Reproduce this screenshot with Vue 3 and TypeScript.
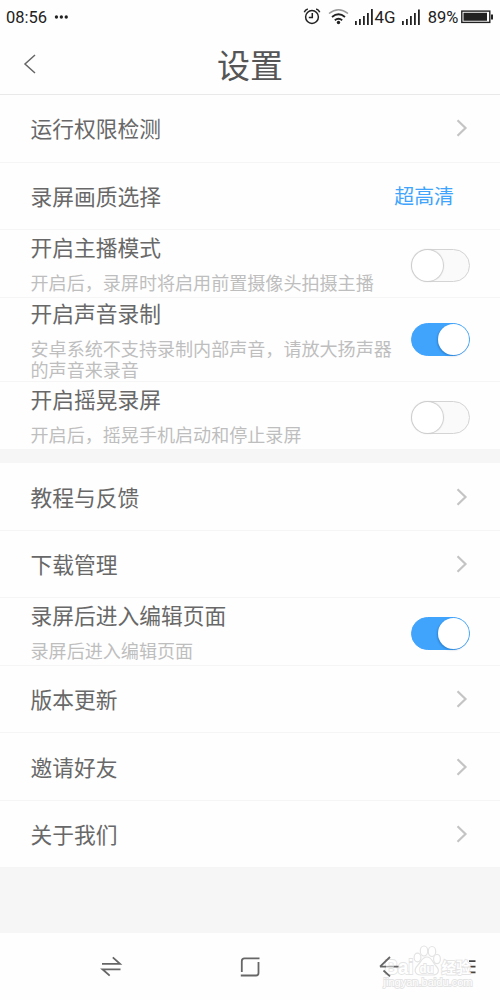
<script setup lang="ts">
interface Row {
  title: string
  sub?: string
  kind: 'link' | 'value' | 'switch'
  on?: boolean
  value?: string
  tall?: boolean
}

const groups: Row[][] = [
  [
    { title: '运行权限检测', kind: 'link' },
    { title: '录屏画质选择', kind: 'value', value: '超高清' },
    { title: '开启主播模式', sub: '开启后，录屏时将启用前置摄像头拍摄主播', kind: 'switch', on: false },
    { title: '开启声音录制', sub: '安卓系统不支持录制内部声音，请放大扬声器\n的声音来录音', kind: 'switch', on: true, tall: true },
    { title: '开启摇晃录屏', sub: '开启后，摇晃手机启动和停止录屏', kind: 'switch', on: false },
  ],
  [
    { title: '教程与反馈', kind: 'link' },
    { title: '下载管理', kind: 'link' },
    { title: '录屏后进入编辑页面', sub: '录屏后进入编辑页面', kind: 'switch', on: true },
    { title: '版本更新', kind: 'link' },
    { title: '邀请好友', kind: 'link' },
    { title: '关于我们', kind: 'link' },
  ],
]
</script>

<template>
  <div class="screen">
    <div class="status">
      <span class="time">08:56</span>
      <svg class="dots" width="16" height="4" viewBox="0 0 16 4"><circle cx="2.500" cy="2" r="1.700" /><circle cx="7.500" cy="2" r="1.700" /><circle cx="12.500" cy="2" r="1.700" /></svg>
      <svg class="signals" width="120" height="20" viewBox="0 0 120 20">
        <g fill="none" stroke="#222" stroke-width="1.5">
          <circle cx="9" cy="10" r="6.4" />
          <path d="M9.3 6v4.6H5.8M1.3 5.2Q2 2.8 4.8 2M16.7 5.2Q16 2.8 13.2 2" />
          <path d="M26 6.500Q35.500-1.200 45 6.500" stroke="#999" />
          <path d="M29 10Q35.500 4.600 42 10M31.800 13.300Q35.500 10.300 39.200 13.300" stroke-width="1.800" />
        </g>
        <circle cx="35.500" cy="15.500" r="1.700" fill="#222" />
        <path fill="#222" d="M52 14h1.800v4h-1.800zM56 12h1.800v6h-1.800zM60 9h1.800v9h-1.800zM64 6h1.800v12h-1.800zM68 2h1.800v16h-1.800zM99 14h1.800v4h-1.800zM103 12h1.800v6h-1.800zM107 9h1.800v9h-1.800zM111 6h1.800v12h-1.800zM115 2.500h1.800v15.500h-1.800z" />
        <text x="71.500" y="16.300" textLength="21" lengthAdjust="spacingAndGlyphs">4G</text>
      </svg>
      <span class="percent">89%</span>
      <svg class="battery" width="33" height="14" viewBox="0 0 33 14">
        <rect x=".8" y="1.100" width="28" height="11.300" fill="none" stroke="#222" stroke-width="1.400" />
        <path fill="#222" d="M2.500 2.800h23.500v8H2.500zM30 4.500h2v5h-2z" />
      </svg>
    </div>

    <header>
      <svg class="back" width="14" height="22" viewBox="0 0 14 22"><path d="M12 2L2 11l10 9" /></svg>
      <h1>设置</h1>
    </header>

    <section v-for="(group, g) in groups" :key="g">
      <div v-for="row in group" :key="row.title" class="row" :class="{ tall: row.tall, double: row.sub }">
        <div class="copy">
          <div class="title">{{ row.title }}</div>
          <div v-if="row.sub" class="sub">{{ row.sub }}</div>
        </div>
        <svg v-if="row.kind === 'link'" class="chevron" width="12" height="18" viewBox="0 0 12 18"><path d="M1.500 1.300L9.500 9l-8 7.700" /></svg>
        <span v-else-if="row.kind === 'value'" class="value">{{ row.value }}</span>
        <span v-else class="switch" :class="{ on: row.on }"><i></i></span>
      </div>
    </section>

    <nav>
      <svg width="500" height="67" viewBox="0 0 500 67">
        <g fill="none" stroke="#666" stroke-width="1.800">
          <path d="M102 30.800h18l-7.200-6.500M120.500 36.300h-18l7.200 6.300" />
          <path d="M241.800 39V28q0-2.700 2.700-2.700H259.500M258.500 29v11q0 2.500-2.500 2.500H240.800" />
          <path d="M469 28.200h6.500M469 33.600h6.500M469 39.300h6.500" stroke="#444" />
        </g>
        <g class="mark">
          <text x="384.500" y="40.500" class="brand" textLength="29" lengthAdjust="spacingAndGlyphs">Bai</text>
          <g>
            <ellipse cx="417.500" cy="24.500" rx="3.400" ry="4.300" />
            <ellipse cx="424" cy="18" rx="3.700" ry="5" />
            <ellipse cx="432" cy="18.500" rx="3.700" ry="5" />
            <ellipse cx="437" cy="26" rx="3.400" ry="4.700" />
            <path d="M427 24c-5 0-6 5-9 8-5 5-3 10 3 10h11c7 0 8-5 4-9-4-4-4-9-9-9z" />
          </g>
          <text x="419.500" y="39.500" class="du" textLength="14" lengthAdjust="spacingAndGlyphs">du</text>
          <text x="441.500" y="39.500" class="cn">经验</text>
          <text x="383.500" y="53" class="site" textLength="89" lengthAdjust="spacingAndGlyphs">jingyan.baidu.com</text>
        </g>
        <path d="M390 24l-10 9.600M383.500 37.500l6.500 5.800M380 33.600h6M393.500 33.600h5" fill="none" stroke="#666" stroke-width="1.800" />
        <path d="M386 33.600h8" stroke="#aaa" stroke-width="1.500" />
      </svg>
    </nav>
  </div>
</template>

<style>
body { margin: 0; }
</style>

<style scoped>
.screen {
  width: 500px;
  height: 1000px;
  box-sizing: border-box;
  overflow: hidden;
  display: flex;
  flex-direction: column;
  background: #f6f6f6;
  font-family: "Noto Sans CJK SC", sans-serif;
}
.status {
  height: 34px;
  flex: none;
  display: flex;
  align-items: center;
  padding: 0 6px;
  background: #fefefe;
  color: #222;
  font: 17px/34px Roboto, sans-serif;
}
.time { width: 49px; font-size: 16.500px; padding-top: 1px; }
.dots { fill: #222; }
.signals { margin-left: 233px; flex: none; }
.signals text { font: 17px Roboto, sans-serif; fill: #222; }
.percent { margin-left: 5px; width: 33px; font-size: 16.500px; white-space: nowrap; padding-top: 2px; }
.battery { flex: none; margin-left: 1px; }
header {
  height: 61px;
  flex: none;
  box-sizing: border-box;
  border-bottom: 1px solid #e9e9e9;
  display: grid;
  grid-template-columns: 100px 1fr 100px;
  align-items: center;
  background: #fefefe;
}
.back { margin-left: 23px; fill: none; stroke: #666; stroke-width: 1.500; }
h1 { margin: 0; text-align: center; font-size: 33px; line-height: 60px; font-weight: 400; color: #555; }
section { flex: none; background: #fefefe; }
section + section { margin-top: 13.900px; }
.row {
  height: 67.500px;
  box-sizing: border-box;
  border-bottom: 1px solid #f5f5f5;
  display: flex;
  justify-content: space-between;
  align-items: center;
  padding: 0 30.500px;
}
.row.tall { height: 84.500px; }
.copy { white-space: pre; }
.double .copy { margin-bottom: 3px; }
.tall .copy { margin-bottom: 1.500px; }
.title { font-size: 21.750px; line-height: 32px; color: #686868; }
.sub { margin-top: 9px; font-size: 18.070px; line-height: 21px; color: #bebebe; }
.chevron { margin-right: 2px; fill: none; stroke: #c4c4c4; stroke-width: 2.200; }
.value { margin-right: 15.500px; padding-top: 1px; font-size: 19.900px; line-height: 30px; color: #40a4fd; }
.switch {
  width: 59px;
  height: 33px;
  flex: none;
  margin: 4px 0 0;
  box-sizing: border-box;
  display: flex;
  align-items: center;
  border: 1.500px solid #d4d4d4;
  border-radius: 17px;
  background: #fafafa;
}
.tall .switch { margin-top: 1px; }
.switch i {
  width: 31px;
  height: 31px;
  border-radius: 50%;
  background: #fff;
  box-shadow: 0 0 1px 1px #ccc;
}
.switch.on { justify-content: flex-end; background: #40a4fd; border-color: #40a4fd; }
.switch.on i { box-shadow: -1px 1px 2px rgba(0, 60, 120, .3); }
nav { height: 67px; flex: none; margin-top: auto; background: #fefefe; }
nav svg { display: block; }
.mark { fill: #fff; stroke: #e4e4e4; stroke-width: 1.200; }
.mark text { paint-order: stroke; stroke-width: 1.800; }
.brand { font: bold 21px "Liberation Sans", sans-serif; }
.du { font: bold 13px "Liberation Sans", sans-serif; }
.cn { font: bold 14.500px "Noto Sans CJK SC", sans-serif; }
.site { font: 11.500px "Liberation Sans", sans-serif; }
</style>
